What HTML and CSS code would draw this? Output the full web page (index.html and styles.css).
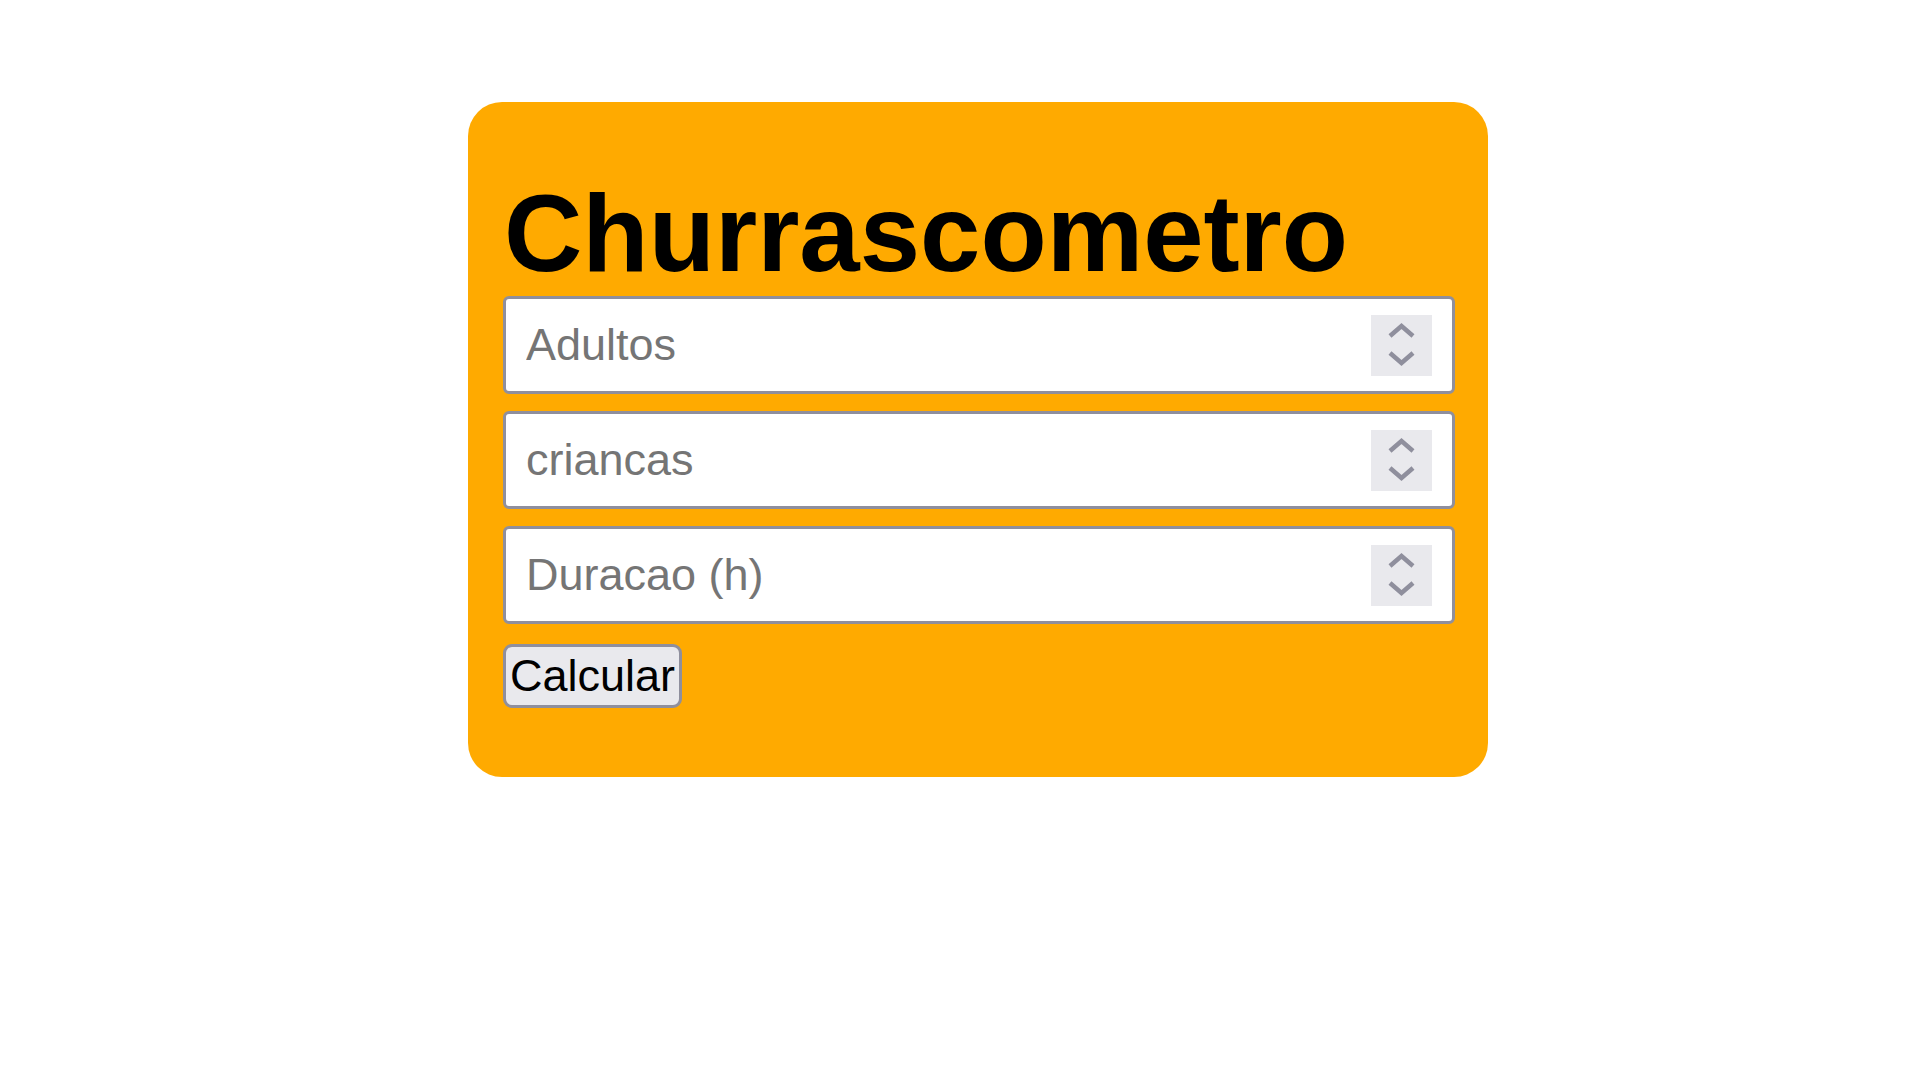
FILE: index.html
```html
<!DOCTYPE html>
<html lang="pt">
<head>
<meta charset="utf-8">
<title>Churrascometro</title>
<link rel="stylesheet" href="styles.css">
</head>
<body>
<main class="card">
  <h1 class="title">Churrascometro</h1>
  <div class="field">
    <input class="num" type="number" placeholder="Adultos">
    <div class="spin"><svg viewBox="0 0 61 61" width="61" height="61"><path d="M19 21 L30.5 11 L42 21 M19 38 L30.5 48 L42 38" fill="none" stroke="#8f8f9d" stroke-width="4.5"/></svg></div>
  </div>
  <div class="field">
    <input class="num" type="number" placeholder="criancas">
    <div class="spin"><svg viewBox="0 0 61 61" width="61" height="61"><path d="M19 21 L30.5 11 L42 21 M19 38 L30.5 48 L42 38" fill="none" stroke="#8f8f9d" stroke-width="4.5"/></svg></div>
  </div>
  <div class="field">
    <input class="num" type="number" placeholder="Duracao (h)">
    <div class="spin"><svg viewBox="0 0 61 61" width="61" height="61"><path d="M19 21 L30.5 11 L42 21 M19 38 L30.5 48 L42 38" fill="none" stroke="#8f8f9d" stroke-width="4.5"/></svg></div>
  </div>
  <button class="btn" type="button">Calcular</button>
</main>
</body>
</html>
```
FILE: styles.css
```css
html, body {
  margin: 0;
  padding: 0;
  background: #ffffff;
}
body {
  font-family: "Liberation Sans", Arial, sans-serif;
  padding: 102px 0 0 468px;
}
.card {
  box-sizing: border-box;
  width: 1020px;
  background: #ffaa00;
  border-radius: 34px;
  padding: 70px 33px 69px 35px;
  display: flex;
  flex-direction: column;
  align-items: flex-start;
}
.title {
  margin: 0 0 0 1px;
  font-size: 108.5px;
  font-weight: bold;
  line-height: 124px;
  color: #000;
}
.field {
  box-sizing: border-box;
  width: 952px;
  height: 98px;
  border: 3px solid #8f8f9d;
  border-radius: 6px;
  background: #fff;
  display: flex;
  align-items: center;
  padding: 0 20px 0 20px;
  margin-bottom: 17px;
}
.num {
  flex: 1;
  min-width: 0;
  border: none;
  outline: none;
  background: transparent;
  font-family: "Liberation Sans", Arial, sans-serif;
  font-size: 45px;
  padding: 0;
  margin: 0;
  color: #000;
  -moz-appearance: textfield;
}
.num::-webkit-inner-spin-button,
.num::-webkit-outer-spin-button {
  -webkit-appearance: none;
  margin: 0;
}
.num::placeholder {
  color: #757575;
}
.spin {
  width: 61px;
  height: 61px;
  background: #e9e9ed;
  display: flex;
}
.btn {
  margin-top: 3px;
  height: 64px;
  box-sizing: border-box;
  padding: 0 4px;
  font-family: "Liberation Sans", Arial, sans-serif;
  font-size: 45px;
  color: #000;
  background: #e9e9ed;
  border: 3px solid #8f8f9d;
  border-radius: 9px;
}
```
